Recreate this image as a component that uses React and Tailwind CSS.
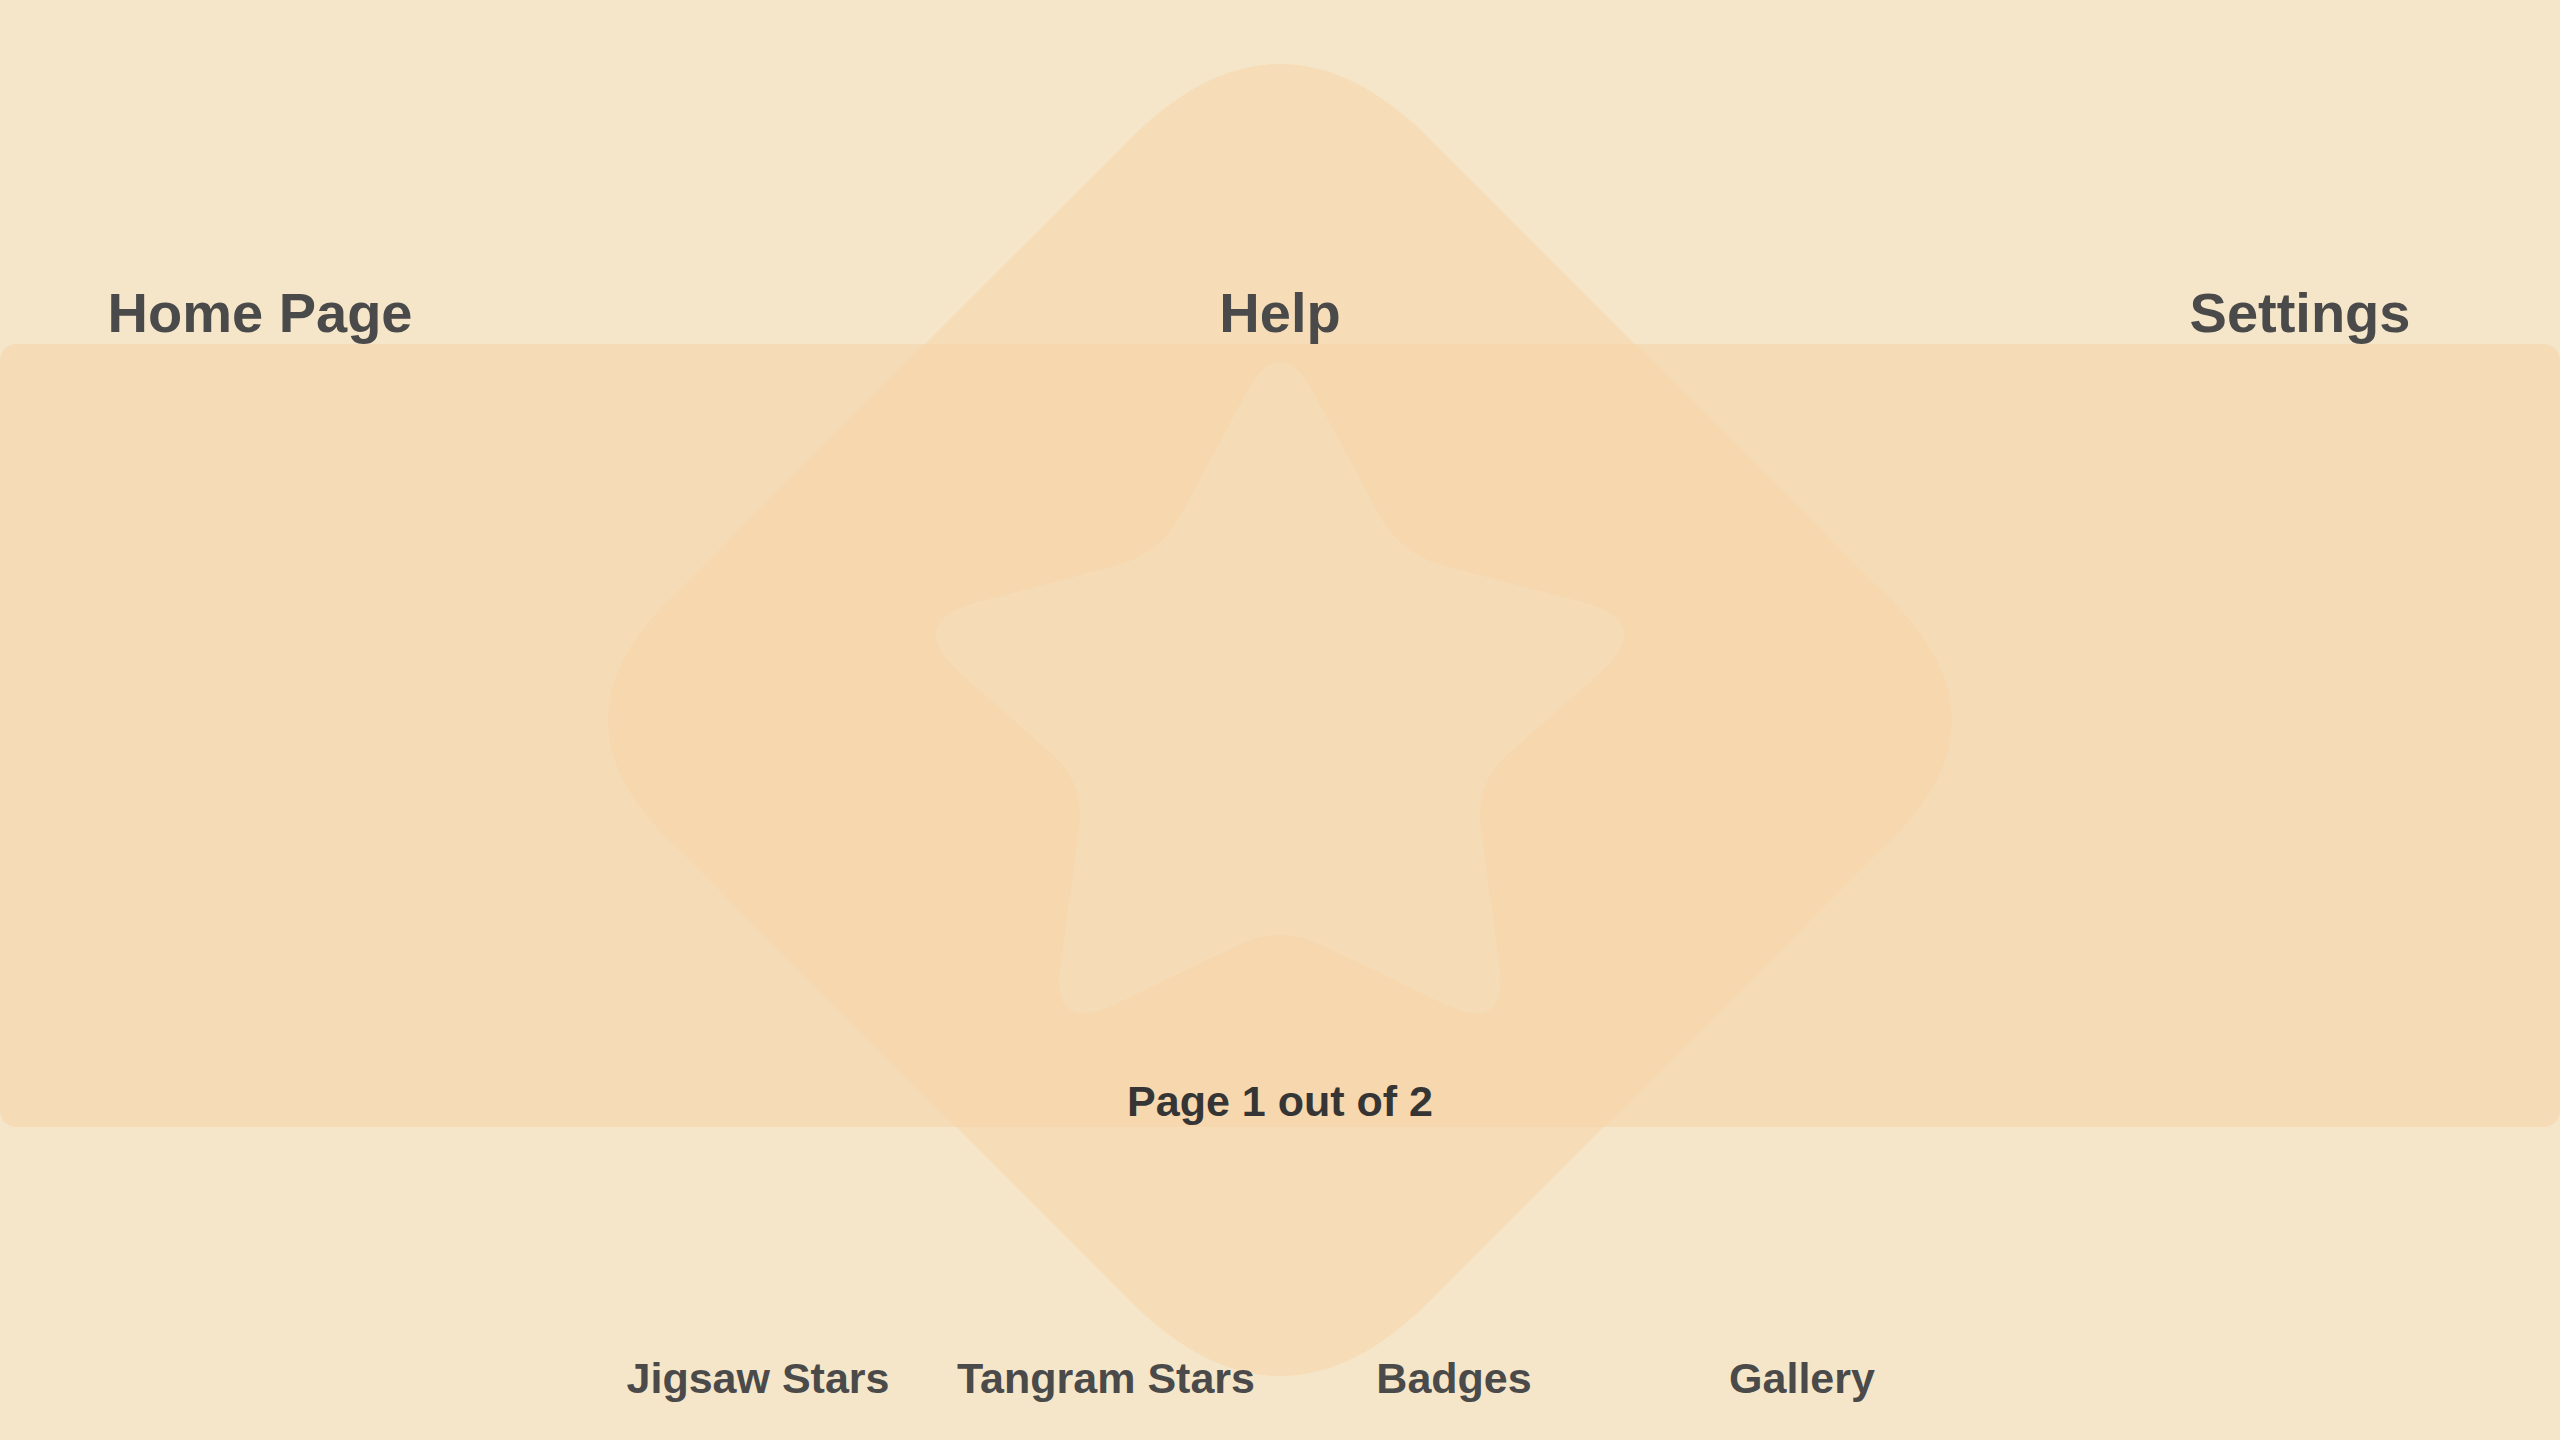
import React from 'react';

// rounded polygon: every corner is cut at `cuts[i]` px and bent with a quadratic curve
function roundedPoly(pts, cuts) {
  const n = pts.length;
  let d = '';
  for (let i = 0; i < n; i++) {
    const [px, py] = pts[i];
    const [ax, ay] = pts[(i - 1 + n) % n];
    const [bx, by] = pts[(i + 1) % n];
    const la = Math.hypot(ax - px, ay - py);
    const lb = Math.hypot(bx - px, by - py);
    const c = cuts[i];
    const s = [px + ((ax - px) * c) / la, py + ((ay - py) * c) / la];
    const e = [px + ((bx - px) * c) / lb, py + ((by - py) * c) / lb];
    d += `${i === 0 ? 'M' : 'L'}${s[0].toFixed(1)} ${s[1].toFixed(1)} Q${px} ${py} ${e[0].toFixed(1)} ${e[1].toFixed(1)} `;
  }
  return d + 'Z';
}

const CX = 1280;
const CY = 720;

const diamond = roundedPoly(
  [[CX, CY - 731], [CX + 731, CY], [CX, CY + 731], [CX - 731, CY]],
  [212, 167, 212, 167]
);

const starPts = [];
const starCuts = [];
for (let k = 0; k < 10; k++) {
  const ang = ((-90 + 36 * k) * Math.PI) / 180;
  const r = k % 2 === 0 ? 390 : 205;
  let x = CX + r * Math.cos(ang);
  let y = CY + r * Math.sin(ang);
  // side tips sit a little lower and blunter than a regular star
  if (k === 2 || k === 8) { x = CX + (k === 2 ? 378 : -378); y = 622; }
  starPts.push([+x.toFixed(1), +y.toFixed(1)]);
  starCuts.push(k % 2 === 0 ? (k === 2 || k === 8 ? 80 : 72) : 45);
}
const star = roundedPoly(starPts, starCuts);

const font = { fontFamily: '"Liberation Sans", Arial, sans-serif' };

export default function App() {
  const tabs = ['Jigsaw Stars', 'Tangram Stars', 'Badges', 'Gallery'];

  return (
    <div className="relative flex h-[1440px] w-full flex-col overflow-hidden bg-[#f5e6c9]" style={font}>
      {/* top nav */}
      <div className="relative z-10 flex justify-between pt-[285px] text-[56px] font-bold leading-none text-[#4a4a4a]">
        <div className="w-[520px] text-center">Home Page</div>
        <div className="w-[520px] text-center">Help</div>
        <div className="w-[520px] text-center">Settings</div>
      </div>

      {/* band */}
      <div className="mt-[3px] flex h-[783px] items-end justify-center rounded-[16px] bg-[#f5dcb7] pb-[4px]">
        <div className="relative z-10 text-[43px] font-bold leading-none text-[#353535]">Page 1 out of 2</div>
      </div>

      {/* bottom tabs */}
      <div className="relative z-10 mt-[230px] flex justify-center text-[43px] font-bold leading-none text-[#4a4a4a]">
        {tabs.map(t => (
          <div key={t} className="w-[348px] text-center">{t}</div>
        ))}
      </div>

      {/* diamond with star cut out */}
      <svg className="pointer-events-none absolute inset-0 h-full w-full" viewBox="0 0 2560 1440">
        <path d={`${diamond} ${star}`} fill="rgba(245,212,168,0.55)" fillRule="evenodd" />
      </svg>
    </div>
  );
}
